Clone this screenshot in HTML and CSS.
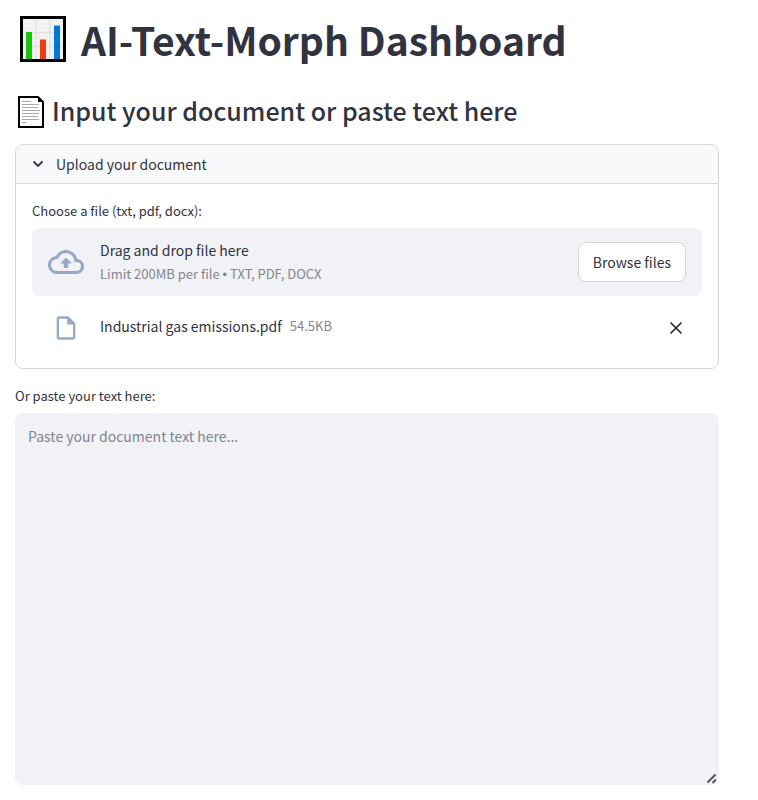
FILE: index.html
```html
<!DOCTYPE html>
<html lang="en">
<head>
<meta charset="utf-8">
<meta name="viewport" content="width=device-width, initial-scale=1">
<title>AI-Text-Morph Dashboard</title>
<link rel="stylesheet" href="styles.css">
</head>
<body>
<main class="page">
  <h1 class="title">
    <svg class="title-icon" viewBox="0 0 46 46" aria-hidden="true">
      <rect width="46" height="46" fill="#000"/>
      <rect x="3" y="3" width="40" height="40" fill="#f2f2f2"/>
      <path d="M16 3v40M30 3v40M3 16.500h40M3 30.500h40" stroke="#e3e3e5" stroke-width="1.500" fill="none"/>
      <rect x="6" y="16" width="6" height="27" fill="#16c60c"/>
      <rect x="20" y="23.500" width="6" height="19.500" fill="#f03a17"/>
      <rect x="34" y="9.500" width="6" height="33.500" fill="#0078d7"/>
    </svg>
    <span>AI-Text-Morph Dashboard</span>
  </h1>
  <h2 class="subtitle">
    <svg class="subtitle-icon" viewBox="0 0 26 32" aria-hidden="true">
      <path d="M1 1h19l5 5v25H1z" fill="#fff" stroke="#000" stroke-width="2"/>
      <path d="M20 1v5h5z" fill="#000"/>
      <path d="M4 5.500h9M4 8.500h17M4 11.500h16M4 14.500h18M4 17.500h17M4 20.500h16M4 23.500h17M4 26.500h4" stroke="#aaa" stroke-width="1" fill="none"/>
    </svg>
    <span>Input your document or paste text here</span>
  </h2>

  <details class="expander" open>
    <summary class="expander-head">
      <svg class="chevron" viewBox="0 0 12 12" aria-hidden="true"><path d="M1.500 3.500 6 8l4.500-4.500" fill="none" stroke="#31333f" stroke-width="1.800"/></svg>
      <span>Upload your document</span>
    </summary>
    <div class="expander-body">
      <p class="label" id="upload-label">Choose a file (txt, pdf, docx):</p>
      <section class="dropzone" aria-labelledby="upload-label">
        <svg class="cloud" viewBox="0 0 24 24" aria-hidden="true"><path d="M19.350 10.040A7.490 7.490 0 0 0 12 4C9.110 4 6.600 5.640 5.350 8.040A5.994 5.994 0 0 0 0 14c0 3.310 2.690 6 6 6h13c2.760 0 5-2.240 5-5 0-2.640-2.050-4.780-4.650-4.960zM19 18H6c-2.210 0-4-1.790-4-4 0-2.050 1.530-3.760 3.560-3.970l1.070-.11.5-.95A5.469 5.469 0 0 1 12 6c2.620 0 4.880 1.860 5.390 4.430l.3 1.500 1.530.11A2.980 2.980 0 0 1 22 15c0 1.650-1.350 3-3 3zM8 13h2.550v3h2.900v-3H16l-4-4z" fill="#98a7c7"/></svg>
        <div class="drop-text">
          <span class="text">Drag and drop file here</span>
          <span class="note">Limit 200MB per file <span class="bullet">•</span> TXT, PDF, DOCX</span>
        </div>
        <button class="browse" type="button">Browse files</button>
      </section>
      <div class="file">
        <svg class="file-icon" viewBox="0 0 24 24" aria-hidden="true"><path d="M14 2H6c-1.100 0-1.990.9-1.990 2L4 20c0 1.100.89 2 1.990 2H18c1.100 0 2-.9 2-2V8l-6-6zM6 20V4h7v5h5v11H6z" fill="#98a7c7"/></svg>
        <div class="file-name">
          <span class="text">Industrial gas emissions.pdf</span>
          <span class="note">54.5KB</span>
        </div>
        <button class="remove" type="button" aria-label="Remove file">
          <svg viewBox="0 0 12 12" aria-hidden="true"><path d="M.5.5l11 11M11.500.5l-11 11" stroke="#31333f" stroke-width="1.600" fill="none"/></svg>
        </button>
      </div>
    </div>
  </details>

  <label class="label paste-label" for="paste">Or paste your text here:</label>
  <textarea class="paste" id="paste" placeholder="Paste your document text here..."></textarea>
</main>
</body>
</html>
```
FILE: styles.css
```css
* {
  box-sizing: border-box;
}

body {
  margin: 0;
  background: #fff;
  color: #31333f;
  font-family: "Source Sans Pro", "Noto Sans CJK SC", sans-serif;
  font-size: 14px;
  line-height: 24px;
}

.page {
  padding: 11px 39px 15px 15px;
}

.title,
.subtitle {
  display: flex;
  align-items: center;
  margin: 0;
}

.title {
  gap: 15px;
  padding-left: 5px;
  font-size: 39px;
  font-weight: 700;
  line-height: 56px;
}

.title-icon {
  width: 46px;
  height: 46px;
  flex: none;
}

.subtitle {
  align-items: flex-end;
  gap: 8px;
  margin: 25px 0 16px;
  padding-left: 3px;
  font-size: 25px;
  font-weight: 500;
  line-height: 36px;
}

.subtitle-icon {
  width: 26px;
  height: 32px;
  flex: none;
}

.expander {
  border: 1px solid #d6d6d9;
  border-radius: 8px;
  overflow: hidden;
}

.expander-head {
  display: flex;
  align-items: center;
  gap: 12px;
  padding: 7px 16px;
  background: #f8f9fb;
  border-bottom: 1px solid #d6d6d9;
  list-style: none;
  cursor: pointer;
}

.chevron {
  width: 12px;
  height: 12px;
}

.expander-body {
  padding: 15px 16px 24px;
}

.label {
  display: block;
  margin: 0 0 5px;
  font-size: 13px;
  line-height: 24px;
}

.dropzone {
  display: flex;
  align-items: center;
  padding: 10px 16px;
  background: #f0f2f6;
  border-radius: 8px;
}

.cloud {
  width: 36px;
  height: 36px;
  margin-right: 16px;
  flex: none;
}

.drop-text {
  display: flex;
  flex-direction: column;
  flex: 1;
}

.note {
  color: #83858d;
  font-size: 13px;
}

.bullet {
  font-family: "Liberation Sans", sans-serif;
  line-height: 1;
}

.browse {
  height: 40px;
  padding: 0 14px;
  background: #fff;
  border: 1px solid #d6d6d9;
  border-radius: 8px;
  color: inherit;
  font: inherit;
}

.file {
  display: flex;
  align-items: center;
  padding: 16px 16px 0;
}

.file-icon {
  width: 28px;
  height: 28px;
  margin: 2px 20px 2px 4px;
  flex: none;
}

.file-name {
  display: flex;
  align-items: center;
  gap: 8px;
  flex: 1;
  padding-bottom: 4px;
}

.remove {
  display: flex;
  padding: 4px;
  background: none;
  border: 0;
}

.remove svg {
  width: 12px;
  height: 12px;
}

.paste-label {
  margin-top: 15px;
}

.paste {
  display: block;
  width: 100%;
  height: 372px;
  padding: 10px 12px;
  background: #f0f2f6;
  border: 1px solid #f0f2f6;
  border-radius: 8px;
  color: inherit;
  font: inherit;
  resize: vertical;
}

.paste::placeholder {
  color: #83858d;
}

.paste::-webkit-resizer {
  background: url("data:image/svg+xml,%3Csvg xmlns='http://www.w3.org/2000/svg' width='15' height='15'%3E%3Cpath d='M4.500 13.500l8-8M9.500 14l3.500-3.500' stroke='%23555' stroke-width='2' fill='none'/%3E%3C/svg%3E") no-repeat;
}
```
